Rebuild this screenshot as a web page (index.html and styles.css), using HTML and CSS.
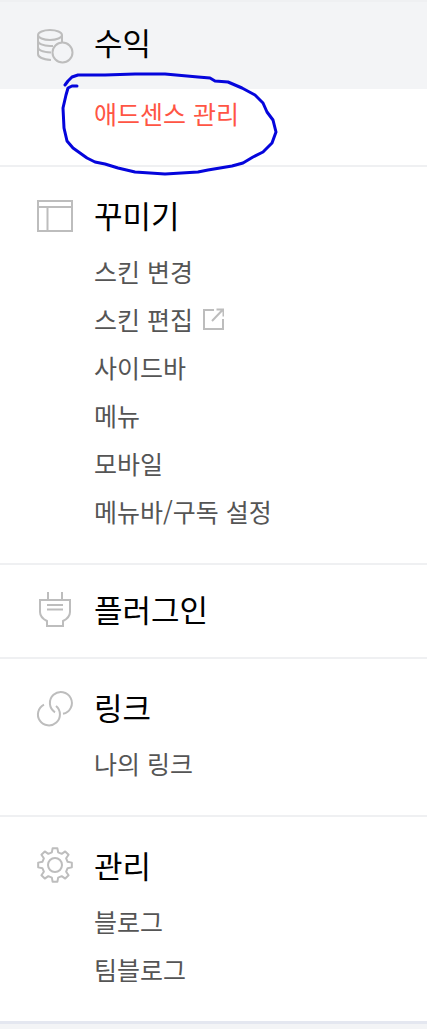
FILE: index.html
```html
<!DOCTYPE html>
<html lang="ko">
<head>
<meta charset="utf-8">
<title>메뉴</title>
<link rel="stylesheet" href="styles.css">
</head>
<body>
<nav class="menu">
  <section class="group group-first">
    <div class="head head-active">
      <svg class="icon" viewBox="0 0 38 36" fill="none"><g stroke="#bdbdbd" stroke-width="2"><ellipse cx="14" cy="7" rx="12" ry="5"/><path d="M2 7v19c0 3 5 5.500 13 6M2 13c0 2.500 5 5 12 5h3M2 19c0 3 5 5 13 5.500M26 7v8"/><circle cx="26.500" cy="24.500" r="10"/></g></svg>
      <h2 class="title">수익</h2>
    </div>
    <ul class="items">
      <li class="item item-on">애드센스 관리</li>
    </ul>
  </section>
  <section class="group">
    <div class="head">
      <svg class="icon" viewBox="0 0 38 36" fill="none"><g stroke="#bdbdbd" stroke-width="2"><path d="M2 4h34v30H2zM2 10h34M11.500 10v24"/></g></svg>
      <h2 class="title">꾸미기</h2>
    </div>
    <ul class="items">
      <li class="item">스킨 변경</li>
      <li class="item">스킨 편집<svg class="ext" viewBox="0 0 22 22" fill="none"><path d="M12 2H2v19h19V11M10 13 20.500 2M14.500 1.500h7v7" stroke="#bdbdbd" stroke-width="2"/></svg></li>
      <li class="item">사이드바</li>
      <li class="item">메뉴</li>
      <li class="item">모바일</li>
      <li class="item">메뉴바/구독 설정</li>
    </ul>
  </section>
  <section class="group group-single">
    <div class="head">
      <svg class="icon" viewBox="0 0 38 36" fill="none"><g stroke="#bdbdbd" stroke-width="2"><path d="M12 1v8M26 1v8M4 9h30v12c0 4-3 7-7 9v5H11v-5c-4-2-7-5-7-9zM11 14h16M11 18.500h16"/></g></svg>
      <h2 class="title">플러그인</h2>
    </div>
  </section>
  <section class="group">
    <div class="head">
      <svg class="icon" viewBox="0 0 38 36" fill="none"><g stroke="#bdbdbd" stroke-width="2"><path d="M27 24.800A11 11 0 1 0 19 23.300"/><path d="M8 15.600A11 11 0 1 0 20 17"/></g></svg>
      <h2 class="title">링크</h2>
    </div>
    <ul class="items">
      <li class="item">나의 링크</li>
    </ul>
  </section>
  <section class="group">
    <div class="head">
      <svg class="icon" viewBox="0 0 38 36" fill="none"><g stroke="#bdbdbd" stroke-width="2" stroke-linejoin="round"><path d="M15.850 5.390 16.630 1.170H21.370L22.150 5.390 25.700 6.860 29.230 4.420 32.580 7.770 30.140 11.300 31.610 14.850 35.830 15.630V20.370L31.610 21.150 30.140 24.700 32.580 28.230 29.230 31.580 25.700 29.140 22.150 30.610 21.370 34.830H16.630L15.850 30.610 12.300 29.140 8.770 31.580 5.420 28.230 7.860 24.700 6.390 21.150 2.170 20.370V15.630L6.390 14.850 7.860 11.300 5.420 7.770 8.770 4.420 12.300 6.860z"/><circle cx="19" cy="18" r="7"/></g></svg>
      <h2 class="title">관리</h2>
    </div>
    <ul class="items">
      <li class="item">블로그</li>
      <li class="item">팀블로그</li>
    </ul>
  </section>
</nav>
<div class="footer-band"></div>
<svg class="scribble" viewBox="0 0 427 1029" fill="none"><path d="M65 85 68 81 72 77 78 75 105 75 135 74 165 74 198 77 210 78 215 81 228 82 242 88 255 95 263 103 267 112 273 120 276 132 272 143 263 152 253 157 243 163 232 166 208 170 198 172 165 174 135 172 118 168 105 164 95 162 87 158 80 153 73 148 67 141 64 128 63 108 66 95 68 88 72 86 77 86" stroke="#0505dc" stroke-width="3" stroke-linecap="round" stroke-linejoin="round"/></svg>
</body>
</html>
```
FILE: styles.css
```css
* { box-sizing: border-box; }
html, body { margin: 0; padding: 0; }
body {
  position: relative;
  width: 427px;
  height: 1029px;
  overflow: hidden;
  background: #fff;
  font-family: "Noto Sans CJK KR", "Noto Sans", sans-serif;
}
.menu { display: flex; flex-direction: column; }
.group { border-top: 2px solid #eff0f2; padding-bottom: 28px; }
.group-single { padding-bottom: 24px; }
.head {
  display: flex;
  align-items: center;
  height: 48px;
  margin-top: 24px;
  padding-left: 36px;
  gap: 20px;
}
.group-single .head { margin-top: 20px; }
.head-active {
  height: 87px;
  margin-top: 0;
  background: #f3f4f6;
}
.head-active .title { margin-bottom: 8px; }
.icon { width: 38px; height: 36px; flex: none; overflow: visible; }
.title { margin: 0; font-size: 31px; font-weight: 400; color: #000; line-height: 48px; }
.items { list-style: none; margin: 8px 0 0; padding: 0 0 0 94px; }
.head-active + .items { margin-top: 0; }
.item { display: flex; align-items: center; gap: 9px; height: 48px; font-size: 25px; line-height: 48px; color: #555; }
.item-on { color: #ff5544; }
.ext { width: 22px; height: 22px; flex: none; }
.footer-band { height: 8px; background: #f3f4f6; border-top: 3px solid #e4e7f0; }
.scribble { position: absolute; left: 0; top: 0; width: 427px; height: 1029px; pointer-events: none; }
```
